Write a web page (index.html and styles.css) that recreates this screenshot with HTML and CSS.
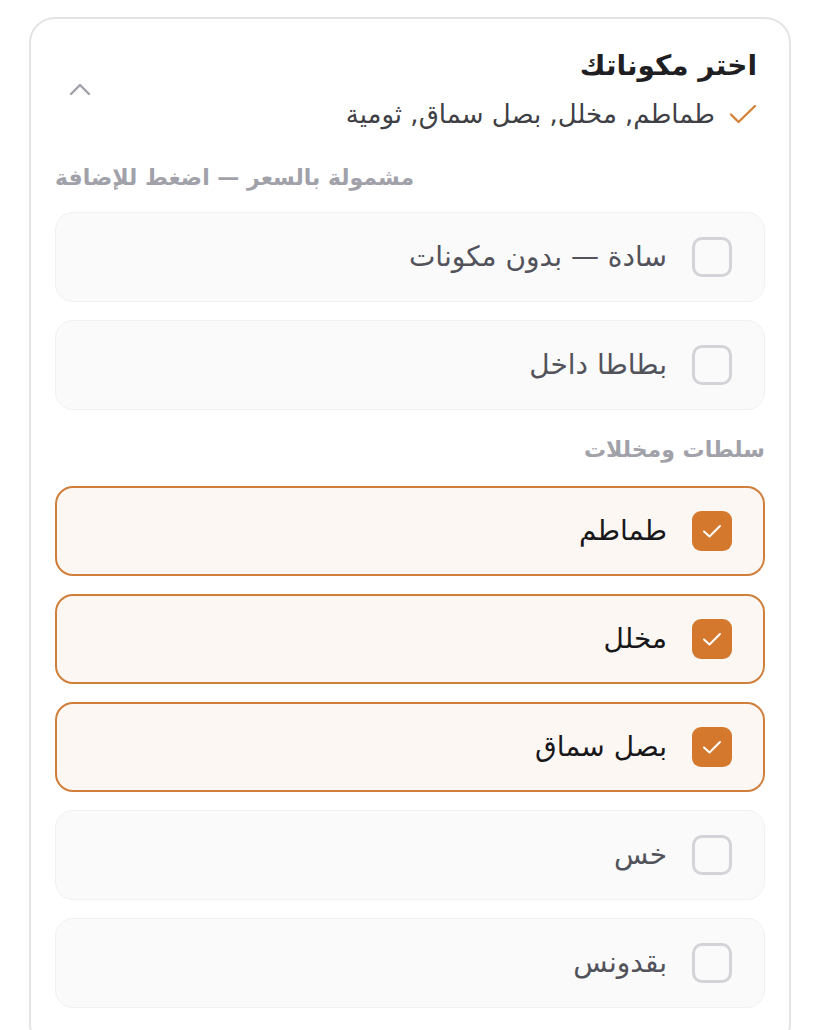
FILE: index.html
```html
<!DOCTYPE html>
<html lang="ar" dir="rtl">
<head>
<meta charset="utf-8">
<title>اختر مكوناتك</title>
<link rel="stylesheet" href="styles.css">
</head>
<body>
<div class="panel">
  <div class="header">
    <div class="header-text">
      <div class="title">اختر مكوناتك</div>
      <div class="summary">
        <svg class="summary-check" width="28" height="22" viewBox="0 0 28 22"><path d="M2 11.5 L9.5 19 L26 3" fill="none" stroke="#d4823a" stroke-width="2.4" stroke-linecap="round" stroke-linejoin="round"/></svg>
        <span>طماطم, مخلل, بصل سماق, ثومية</span>
      </div>
    </div>
    <svg class="chevron" width="24" height="16" viewBox="0 0 24 16"><path d="M3 13 L12 4 L21 13" fill="none" stroke="#a1a1aa" stroke-width="2.4" stroke-linecap="round" stroke-linejoin="round"/></svg>
  </div>

  <div class="group">
    <div class="group-label label-end">مشمولة بالسعر — اضغط للإضافة</div>
    <div class="list">
      <div class="option"><span class="box"></span><span class="opt-text">سادة — بدون مكونات</span></div>
      <div class="option"><span class="box"></span><span class="opt-text">بطاطا داخل</span></div>
    </div>
  </div>

  <div class="group">
    <div class="group-label">سلطات ومخللات</div>
    <div class="list">
      <div class="option selected"><span class="box"><svg width="20" height="16" viewBox="0 0 20 16"><path d="M2 8.5 L7.5 13.5 L18 3" fill="none" stroke="#fff" stroke-width="2" stroke-linecap="round" stroke-linejoin="round"/></svg></span><span class="opt-text">طماطم</span></div>
      <div class="option selected"><span class="box"><svg width="20" height="16" viewBox="0 0 20 16"><path d="M2 8.5 L7.5 13.5 L18 3" fill="none" stroke="#fff" stroke-width="2" stroke-linecap="round" stroke-linejoin="round"/></svg></span><span class="opt-text">مخلل</span></div>
      <div class="option selected"><span class="box"><svg width="20" height="16" viewBox="0 0 20 16"><path d="M2 8.5 L7.5 13.5 L18 3" fill="none" stroke="#fff" stroke-width="2" stroke-linecap="round" stroke-linejoin="round"/></svg></span><span class="opt-text">بصل سماق</span></div>
      <div class="option"><span class="box"></span><span class="opt-text">خس</span></div>
      <div class="option"><span class="box"></span><span class="opt-text">بقدونس</span></div>
    </div>
  </div>
</div>
</body>
</html>
```

FILE: styles.css
```css
* { box-sizing: border-box; }
html, body { margin: 0; padding: 0; background: #ffffff; }
body {
  font-family: "DejaVu Sans", "Noto Sans", sans-serif;
  color: #1f1f23;
  overflow: hidden;
  height: 1030px;
}
.panel {
  margin: 17px 29px 0 29px;
  border: 2px solid #e4e4e7;
  border-radius: 26px;
  padding: 29px 24px 40px 24px;
  background: #fff;
}
.header {
  display: flex;
  justify-content: space-between;
  align-items: center;
  padding: 0 8px 0 13px;
}
.header-text { display: flex; flex-direction: column; gap: 14px; }
.title {
  font-size: 28px;
  font-weight: bold;
  line-height: 36px;
  color: #1f1f23;
}
.summary {
  display: flex;
  align-items: center;
  gap: 14px;
  font-size: 26px;
  line-height: 32px;
  color: #3f3f46;
}
.summary-check { display: block; }
.chevron { display: block; }
.group { margin-top: 34px; }
.group + .group { margin-top: 26px; }
.group-label {
  font-size: 22px;
  font-weight: bold;
  line-height: 28px;
  color: #a1a1aa;
  margin-bottom: 20px;
}
.group + .group .group-label { margin-bottom: 22px; }
.label-end { text-align: left; }
.list { display: flex; flex-direction: column; gap: 18px; }
.option {
  height: 90px;
  display: flex;
  align-items: center;
  gap: 25px;
  padding: 0 32px;
  border: 1px solid #f1f1f2;
  border-radius: 18px;
  background: #fafafa;
}
.option.selected {
  border: 2px solid #cf7f3a;
  background: #fdf7f3;
  padding: 0 31px;
}
.box {
  width: 40px;
  height: 40px;
  flex: none;
  border: 3px solid #d4d4d8;
  border-radius: 10px;
  display: flex;
  align-items: center;
  justify-content: center;
}
.selected .box {
  border: none;
  background: #d4782e;
  border-radius: 9px;
}
.box svg { display: block; }
.opt-text {
  font-size: 28px;
  line-height: 36px;
  color: #52525b;
}
.selected .opt-text { color: #18181b; }
```
